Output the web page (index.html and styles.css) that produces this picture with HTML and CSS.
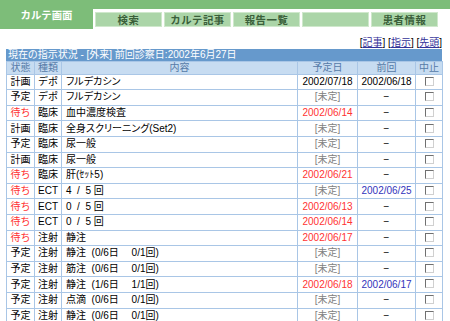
FILE: index.html
```html
<!DOCTYPE html>
<html lang="ja">
<head>
<meta charset="utf-8">
<title>カルテ画面</title>
<link rel="stylesheet" href="styles.css">
</head>
<body>
<div class="header">
  <div class="active-tab">カルテ画面</div>
  <div class="header-rest">
    <div class="greenbar"></div>
    <div class="tabs">
      <div class="tab">検索</div>
      <div class="tab">カルテ記事</div>
      <div class="tab">報告一覧</div>
      <div class="tab"></div>
      <div class="tab">患者情報</div>
    </div>
  </div>
</div>
<div class="content">
  <div class="links">[<a href="#">記事</a>] [<a href="#">指示</a>] [<a href="#">先頭</a>]</div>
  <div class="titlebar">現在の指示状況 - [外来] 前回診察日:2002年6月27日</div>
  <table class="orders">
    <colgroup>
      <col class="c1"><col class="c2"><col class="c3"><col class="c4"><col class="c5"><col class="c6">
    </colgroup>
    <thead>
      <tr><th>状態</th><th>種類</th><th>内容</th><th>予定日</th><th>前回</th><th>中止</th></tr>
    </thead>
    <tbody>
      <tr><td>計画</td><td>デポ</td><td class="l">フルデカシン</td><td>2002/07/18</td><td>2002/06/18</td><td><span class="cb"></span></td></tr>
      <tr><td>予定</td><td>デポ</td><td class="l">フルデカシン</td><td class="g">[未定]</td><td>−</td><td><span class="cb"></span></td></tr>
      <tr><td class="r">待ち</td><td>臨床</td><td class="l">血中濃度検査</td><td class="r">2002/06/14</td><td>−</td><td><span class="cb"></span></td></tr>
      <tr><td>計画</td><td>臨床</td><td class="l">全身スクリーニング(Set2)</td><td class="g">[未定]</td><td>−</td><td><span class="cb"></span></td></tr>
      <tr><td>予定</td><td>臨床</td><td class="l">尿一般</td><td class="g">[未定]</td><td>−</td><td><span class="cb"></span></td></tr>
      <tr><td>計画</td><td>臨床</td><td class="l">尿一般</td><td class="g">[未定]</td><td>−</td><td><span class="cb"></span></td></tr>
      <tr><td class="r">待ち</td><td>臨床</td><td class="l">肝(ｾｯﾄ5)</td><td class="r">2002/06/21</td><td>−</td><td><span class="cb"></span></td></tr>
      <tr><td class="r">待ち</td><td>ECT</td><td class="l">4 &nbsp;/ &nbsp;5 回</td><td class="g">[未定]</td><td class="b">2002/06/25</td><td><span class="cb"></span></td></tr>
      <tr><td class="r">待ち</td><td>ECT</td><td class="l">0 &nbsp;/ &nbsp;5 回</td><td class="r">2002/06/13</td><td>−</td><td><span class="cb"></span></td></tr>
      <tr><td class="r">待ち</td><td>ECT</td><td class="l">0 &nbsp;/ &nbsp;5 回</td><td class="r">2002/06/14</td><td>−</td><td><span class="cb"></span></td></tr>
      <tr><td class="r">待ち</td><td>注射</td><td class="l">静注</td><td class="r">2002/06/17</td><td>−</td><td><span class="cb"></span></td></tr>
      <tr><td>予定</td><td>注射</td><td class="l">静注 &nbsp;(0/6日　&nbsp;0/1回)</td><td class="g">[未定]</td><td>−</td><td><span class="cb"></span></td></tr>
      <tr><td>予定</td><td>注射</td><td class="l">筋注 &nbsp;(0/6日　&nbsp;0/1回)</td><td class="g">[未定]</td><td>−</td><td><span class="cb"></span></td></tr>
      <tr><td>予定</td><td>注射</td><td class="l">静注 &nbsp;(1/6日　&nbsp;1/1回)</td><td class="r">2002/06/18</td><td class="b">2002/06/17</td><td><span class="cb"></span></td></tr>
      <tr><td>予定</td><td>注射</td><td class="l">点滴 &nbsp;(0/6日　&nbsp;0/1回)</td><td class="g">[未定]</td><td>−</td><td><span class="cb"></span></td></tr>
      <tr><td>予定</td><td>注射</td><td class="l">静注 &nbsp;(0/6日　&nbsp;0/1回)</td><td class="g">[未定]</td><td>−</td><td><span class="cb"></span></td></tr>
    </tbody>
  </table>
</div>
</body>
</html>
```
FILE: styles.css
```css
html, body {
  margin: 0;
  padding: 0;
  background: #ffffff;
}
body {
  font-family: "Liberation Sans", "Noto Sans CJK JP", sans-serif;
  font-size: 10px;
  color: #000;
  width: 450px;
  height: 321px;
  overflow: hidden;
}
.header {
  display: flex;
  align-items: flex-start;
}
.active-tab {
  width: 93px;
  height: 29px;
  background: #7dbd79;
  color: #ffffff;
  font-weight: bold;
  font-size: 10.4px;
  display: flex;
  align-items: center;
  justify-content: center;
  padding-bottom: 1px;
  box-sizing: border-box;
}
.header-rest {
  flex: 1;
  display: flex;
  flex-direction: column;
}
.greenbar {
  height: 9px;
  background: #7dbd79;
}
.tabs {
  display: flex;
  gap: 2px;
  padding: 3px 0 0 2px;
}
.tab {
  width: 67px;
  height: 15px;
  box-sizing: border-box;
  background: #abd5a8;
  border: 1px solid #cfe8cc;
  color: #3a5f3a;
  font-weight: bold;
  font-size: 10.4px;
  display: flex;
  align-items: center;
  justify-content: center;
  letter-spacing: 0.5px;
}
.content {
  padding: 0 8px 0 6px;
}
.links {
  text-align: right;
  margin-top: 8px;
  height: 12px;
  line-height: 12px;
}
.links a {
  color: #333399;
  text-decoration: underline;
}
.titlebar {
  background: #6699cc;
  color: #ffffff;
  height: 12px;
  line-height: 12px;
  padding-left: 2px;
  white-space: nowrap;
  font-feature-settings: "palt";
}
.orders {
  border-collapse: collapse;
  table-layout: fixed;
  width: 436px;
  border: 1px solid #6f9fd2;
}
.c1 { width: 28px; }
.c2 { width: 27px; }
.c3 { width: 236px; }
.c4 { width: 60px; }
.c5 { width: 58px; }
.c6 { width: 27px; }
.orders th {
  background: #c7dcf1;
  color: #557aa8;
  font-weight: normal;
  height: 11.6px;
  line-height: 11px;
  padding: 0;
  border: 1px solid #a9c6e6;
  text-align: center;
}
.orders td {
  height: 14.6px;
  padding: 0;
  line-height: 14px;
  border: 1px solid #a9c6e6;
  text-align: center;
  white-space: nowrap;
  overflow: hidden;
}
.orders td.l {
  text-align: left;
  padding-left: 4px;
  font-feature-settings: "palt";
}
.orders td.r { color: #ff3333; }
.orders td.b { color: #3333bb; }
.orders td.g { color: #808080; }
.cb {
  display: inline-block;
  width: 9px;
  height: 9px;
  box-sizing: border-box;
  border-top: 1px solid #707070;
  border-left: 1px solid #707070;
  border-right: 1px solid #d0d0d0;
  border-bottom: 1px solid #d0d0d0;
  background: #ffffff;
  vertical-align: middle;
  margin-top: -2px;
}
```
